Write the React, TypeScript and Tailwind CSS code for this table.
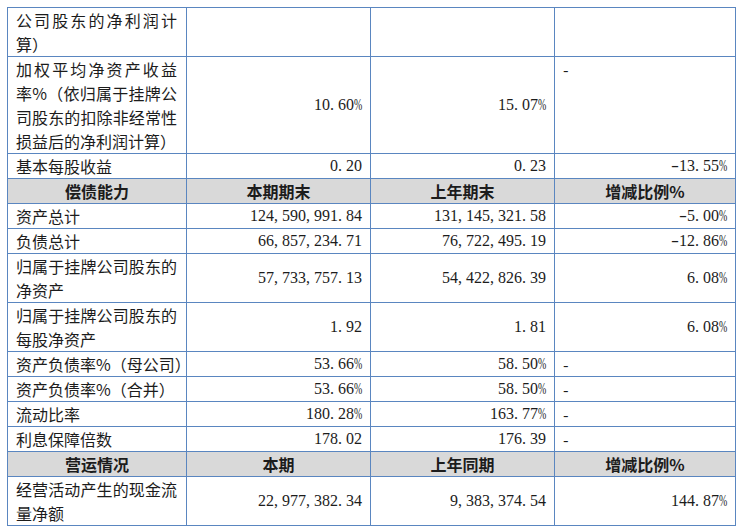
type Row =
  | { kind: "head"; cells: string[] }
  | { kind: "data"; label: string[]; a: string; b: string; c: string }

const rows: Row[] = [
  { kind: "data", label: ["公司股东的净利润计", "算）"], a: "", b: "", c: "" },
  {
    kind: "data",
    label: ["加权平均净资产收益", "率%（依归属于挂牌公", "司股东的扣除非经常性", "损益后的净利润计算）"],
    a: "10.60%",
    b: "15.07%",
    c: "-",
  },
  { kind: "data", label: ["基本每股收益"], a: "0.20", b: "0.23", c: "-13.55%" },
  { kind: "head", cells: ["偿债能力", "本期期末", "上年期末", "增减比例%"] },
  { kind: "data", label: ["资产总计"], a: "124,590,991.84", b: "131,145,321.58", c: "-5.00%" },
  { kind: "data", label: ["负债总计"], a: "66,857,234.71", b: "76,722,495.19", c: "-12.86%" },
  { kind: "data", label: ["归属于挂牌公司股东的", "净资产"], a: "57,733,757.13", b: "54,422,826.39", c: "6.08%" },
  { kind: "data", label: ["归属于挂牌公司股东的", "每股净资产"], a: "1.92", b: "1.81", c: "6.08%" },
  { kind: "data", label: ["资产负债率%（母公司）"], a: "53.66%", b: "58.50%", c: "-" },
  { kind: "data", label: ["资产负债率%（合并）"], a: "53.66%", b: "58.50%", c: "-" },
  { kind: "data", label: ["流动比率"], a: "180.28%", b: "163.77%", c: "-" },
  { kind: "data", label: ["利息保障倍数"], a: "178.02", b: "176.39", c: "-" },
  { kind: "head", cells: ["营运情况", "本期", "上年同期", "增减比例%"] },
  { kind: "data", label: ["经营活动产生的现金流", "量净额"], a: "22,977,382.34", b: "9,383,374.54", c: "144.87%" },
]

const cell = "border border-[#5a86c0] px-2 py-0"
const numCell = `${cell} text-right align-middle font-['Liberation_Serif',serif]`

// half-width, evenly spaced figures like the original document font
function Num({ v }: { v: string }) {
  return (
    <span className="whitespace-nowrap">
      {v.split("").map((ch, i) =>
        /[0-9]/.test(ch) ? (
          ch
        ) : ch === "%" ? (
          <span key={i} className="inline-block w-2 text-left scale-x-[0.62] origin-left">
            %
          </span>
        ) : ch === "-" ? (
          <span key={i} className="inline-block w-2 text-center scale-x-[1.5]">
            -
          </span>
        ) : (
          <span key={i} className="inline-block w-2 text-left">
            {ch}
          </span>
        )
      )}
    </span>
  )
}

function Label({ lines }: { lines: string[] }) {
  return (
    <td className={`${cell} pr-[9px] align-top`}>
      {lines.map((l, i) => (
        <div
          key={i}
          className={
            i < lines.length - 1
              ? "whitespace-nowrap text-justify [text-align-last:justify]"
              : "whitespace-nowrap"
          }
        >
          {l}
        </div>
      ))}
    </td>
  )
}

export default function App() {
  return (
    <div
      lang="zh-CN"
      className="w-[740px] h-[526px] overflow-hidden bg-white pt-[7px] pl-[7px] font-['Noto_Sans_CJK_SC',sans-serif] text-[16px] leading-[24px] text-[#1c1c1c]"
    >
      <table className="table-fixed border-collapse w-[729px]">
        <colgroup>
          <col className="w-[179px]" />
          <col className="w-[184px]" />
          <col className="w-[184px]" />
          <col className="w-[181px]" />
        </colgroup>
        <tbody>
          {rows.map((r, i) =>
            r.kind === "head" ? (
              <tr key={i} className="bg-[#d9d9d9]">
                {r.cells.map((c, j) => (
                  <td key={j} className={`${cell} text-center font-bold`}>
                    {c}
                  </td>
                ))}
              </tr>
            ) : (
              <tr key={i}>
                <Label lines={r.label} />
                <td className={numCell}>{r.a && <Num v={r.a} />}</td>
                <td className={numCell}>{r.b && <Num v={r.b} />}</td>
                {r.c === "-" ? (
                  <td className={`${cell} text-left align-top`}>-</td>
                ) : (
                  <td className={numCell}>{r.c && <Num v={r.c} />}</td>
                )}
              </tr>
            )
          )}
        </tbody>
      </table>
    </div>
  )
}
